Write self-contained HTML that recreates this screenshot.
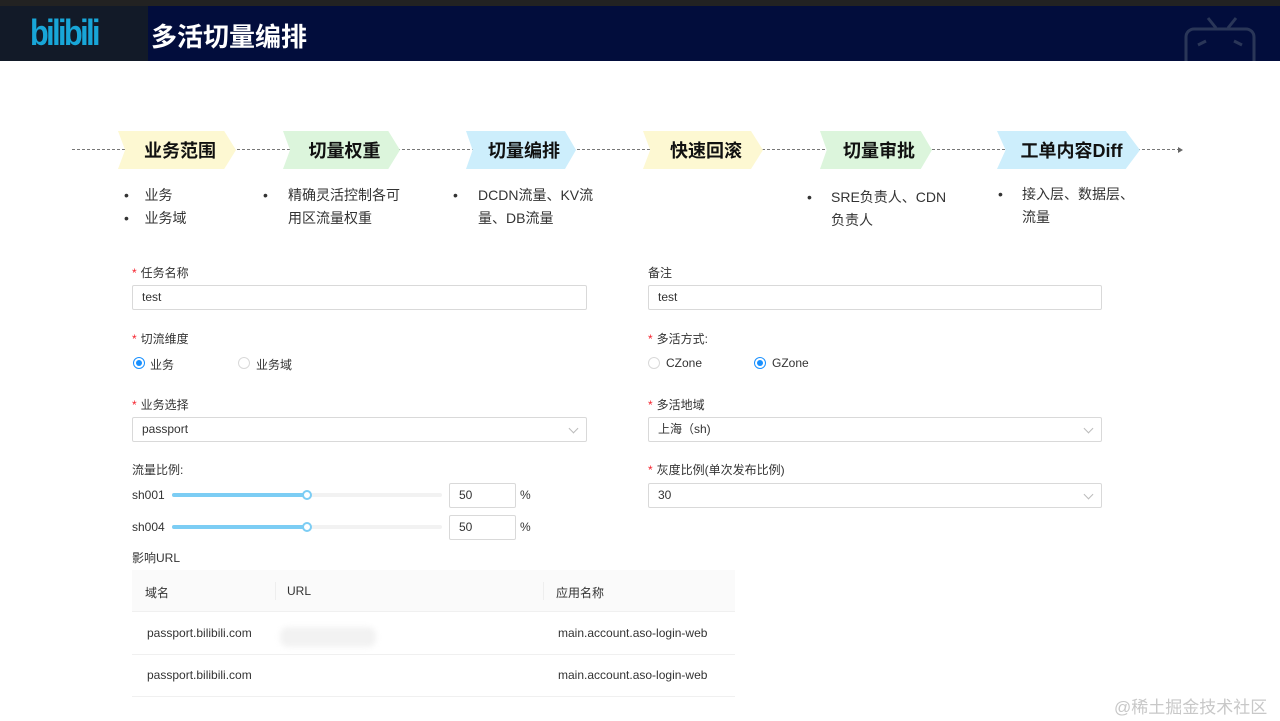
<!DOCTYPE html>
<html><head><meta charset="utf-8"><style>
*{margin:0;padding:0;box-sizing:border-box}
body{width:1280px;height:721px;position:relative;background:#fff;font-family:"Liberation Sans","Noto Sans CJK SC",sans-serif;overflow:hidden;color:#333}
.a{position:absolute}
.chev{position:absolute;top:131px;height:38px;clip-path:polygon(0 0,90% 0,100% 50%,90% 100%,0 100%,6% 50%);font-weight:bold;font-size:18px;color:#111;display:flex;align-items:center;justify-content:center;padding-left:6px}
.y{background:#fdf8d2}.g{background:#dcf5dc}.b{background:#cdeefc}
.bl{position:absolute;font-size:14px;color:#333;line-height:23px}
.lab{position:absolute;font-size:12px;color:#333}
.lab i{color:#f5222d;font-style:normal;margin-right:4px}
.inp{position:absolute;height:25px;border:1px solid #d9d9d9;border-radius:2px;font-size:12px;padding:0 9px;line-height:23px;color:#333}
.rad{position:absolute;width:12px;height:12px;border:1px solid #d9d9d9;border-radius:50%}
.rad.on{border-color:#1890ff}.rad.on:after{content:"";position:absolute;left:2px;top:2px;width:6px;height:6px;border-radius:50%;background:#1890ff}
.arr{position:absolute;right:9px;top:7px;width:7px;height:7px;border-right:1px solid #bbb;border-bottom:1px solid #bbb;transform:rotate(45deg)}
.td{position:absolute;font-size:12px;color:#333}
</style></head><body>
<div class="a" style="left:0;top:0;width:1280px;height:6px;background:#222"></div>
<div class="a" style="left:0;top:6px;width:1280px;height:55px;background:#020d3c"></div>
<div class="a" style="left:0;top:6px;width:148px;height:55px;background:#121a28"></div>
<div class="a" style="left:30px;top:12px;font-size:36px;font-weight:bold;color:#18a6d8;letter-spacing:-3px;transform:scaleX(0.85);transform-origin:left;font-family:'Liberation Sans',sans-serif">bilibili</div>
<div class="a" style="left:151px;top:17px;font-size:26px;font-weight:bold;color:#fff">多活切量编排</div>
<svg class="a" style="left:1180px;top:15px" width="80" height="46"><g fill="none" stroke="#2a3658" stroke-width="3"><rect x="6" y="14" width="68" height="40" rx="8"/><path d="M28 3l8 10M56 3l-8 10M18 30l8-4M62 30l-8-4"/></g></svg>

<div class="a" style="left:72px;top:149px;width:1108px;border-top:1px dashed #777"></div>
<div class="a" style="left:1178px;top:147px;border-left:5px solid #666;border-top:3px solid transparent;border-bottom:3px solid transparent"></div>
<div class="chev y" style="left:118px;width:118px">业务范围</div>
<div class="chev g" style="left:283px;width:117px">切量权重</div>
<div class="chev b" style="left:466px;width:110px">切量编排</div>
<div class="chev y" style="left:643px;width:120px">快速回滚</div>
<div class="chev g" style="left:820px;width:112px">切量审批</div>
<div class="chev b" style="left:997px;width:143px">工单内容Diff</div>

<div class="bl" style="left:124px;top:184px">•&nbsp;&nbsp;&nbsp;&nbsp;业务<br>•&nbsp;&nbsp;&nbsp;&nbsp;业务域</div>
<div class="bl" style="left:263px;top:184px">•</div><div class="bl" style="left:288px;top:184px">精确灵活控制各可<br>用区流量权重</div>
<div class="bl" style="left:453px;top:184px">•</div><div class="bl" style="left:478px;top:184px">DCDN流量、KV流<br>量、DB流量</div>
<div class="bl" style="left:807px;top:186px">•</div><div class="bl" style="left:831px;top:186px">SRE负责人、CDN<br>负责人</div>
<div class="bl" style="left:998px;top:183px">•</div><div class="bl" style="left:1022px;top:183px">接入层、数据层、<br>流量</div>

<div class="lab" style="left:132px;top:264px"><i>*</i>任务名称</div>
<div class="inp" style="left:132px;top:285px;width:455px">test</div>
<div class="lab" style="left:648px;top:264px">备注</div>
<div class="inp" style="left:648px;top:285px;width:454px">test</div>

<div class="lab" style="left:132px;top:330px"><i>*</i>切流维度</div>
<div class="rad on" style="left:133px;top:357px"></div><div class="lab" style="left:150px;top:356px">业务</div>
<div class="rad" style="left:238px;top:357px"></div><div class="lab" style="left:256px;top:356px">业务域</div>
<div class="lab" style="left:648px;top:330px"><i>*</i>多活方式:</div>
<div class="rad" style="left:648px;top:357px"></div><div class="lab" style="left:666px;top:356px">CZone</div>
<div class="rad on" style="left:754px;top:357px"></div><div class="lab" style="left:772px;top:356px">GZone</div>

<div class="lab" style="left:132px;top:396px"><i>*</i>业务选择</div>
<div class="inp" style="left:132px;top:417px;width:455px">passport<span class="arr"></span></div>
<div class="lab" style="left:648px;top:396px"><i>*</i>多活地域</div>
<div class="inp" style="left:648px;top:417px;width:454px">上海（sh)<span class="arr"></span></div>

<div class="lab" style="left:132px;top:461px">流量比例:</div>
<div class="lab" style="left:648px;top:461px"><i>*</i>灰度比例(单次发布比例)</div>
<div class="inp" style="left:648px;top:483px;width:454px">30<span class="arr"></span></div>

<div class="lab" style="left:132px;top:488px">sh001</div>
<div class="a" style="left:172px;top:493px;width:270px;height:4px;background:#f2f2f2;border-radius:2px"></div>
<div class="a" style="left:172px;top:493px;width:135px;height:4px;background:#7ccdf4;border-radius:2px"></div>
<div class="a" style="left:302px;top:490px;width:10px;height:10px;border-radius:50%;background:#fff;border:2px solid #7ccdf4"></div>
<div class="inp" style="left:449px;top:483px;width:67px">50</div><div class="lab" style="left:520px;top:488px">%</div>

<div class="lab" style="left:132px;top:520px">sh004</div>
<div class="a" style="left:172px;top:525px;width:270px;height:4px;background:#f2f2f2;border-radius:2px"></div>
<div class="a" style="left:172px;top:525px;width:135px;height:4px;background:#7ccdf4;border-radius:2px"></div>
<div class="a" style="left:302px;top:522px;width:10px;height:10px;border-radius:50%;background:#fff;border:2px solid #7ccdf4"></div>
<div class="inp" style="left:449px;top:515px;width:67px">50</div><div class="lab" style="left:520px;top:520px">%</div>

<div class="lab" style="left:132px;top:549px">影响URL</div>
<div class="a" style="left:132px;top:570px;width:603px;height:42px;background:#fafafa;border-bottom:1px solid #f0f0f0"></div>
<div class="a" style="left:275px;top:582px;height:18px;border-left:1px solid #eee"></div>
<div class="a" style="left:543px;top:582px;height:18px;border-left:1px solid #eee"></div>
<div class="td" style="left:145px;top:584px">域名</div>
<div class="td" style="left:287px;top:584px">URL</div>
<div class="td" style="left:556px;top:584px">应用名称</div>
<div class="a" style="left:132px;top:654px;width:603px;border-top:1px solid #f0f0f0"></div>
<div class="a" style="left:132px;top:696px;width:603px;border-top:1px solid #f0f0f0"></div>
<div class="td" style="left:147px;top:626px">passport.bilibili.com</div>
<div class="a" style="left:280px;top:627px;width:96px;height:20px;background:#f2f2f2;border-radius:8px;filter:blur(3px)"></div>
<div class="td" style="left:558px;top:626px">main.account.aso-login-web</div>
<div class="td" style="left:147px;top:668px">passport.bilibili.com</div>
<div class="td" style="left:558px;top:668px">main.account.aso-login-web</div>

<div class="a" style="left:1114px;top:693px;font-size:17px;color:#c8c8c8">@稀土掘金技术社区</div>
</body></html>
